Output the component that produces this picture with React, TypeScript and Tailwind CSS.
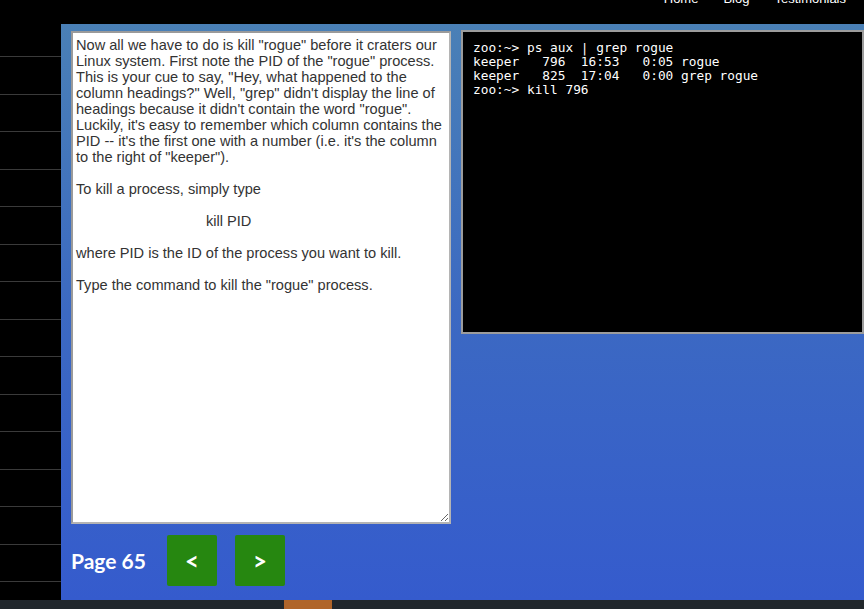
const sideRows = Array.from({ length: 15 })

const termLines = [
  'zoo:~> ps aux | grep rogue',
  'keeper   796  16:53   0:05 rogue',
  'keeper   825  17:04   0:00 grep rogue',
  'zoo:~> kill 796',
]

export default function App() {
  return (
    <div className="w-[864px] h-[609px] overflow-hidden bg-black flex flex-col font-['Liberation_Sans',Arial,sans-serif]">
      {/* Top nav, mostly scrolled off */}
      <nav className="h-6 flex justify-end gap-[25px] pr-[18px] text-[13px] text-white leading-none">
        <span className="-mt-[8px]">Home</span>
        <span className="-mt-[8px]">Blog</span>
        <span className="-mt-[8px]">Testimonials</span>
      </nav>

      <div className="flex flex-1 min-h-0">
        {/* Left menu stub */}
        <div className="w-[61px] shrink-0">
          <div className="h-[33px] border-b border-[#3a3a3a]" />
          {sideRows.map((_, i) => (
            <div key={i} className="h-[37.5px] border-b border-[#3a3a3a]" />
          ))}
        </div>

        {/* Main lesson panel */}
        <main className="flex-1 flex flex-col pl-[10px] pt-[7px] bg-gradient-to-b from-[#4a80b6] via-[#3c69c2] to-[#355bcd]">
          <div className="flex gap-[10px] items-start">
            <div className="w-[380px] h-[493px] shrink-0 bg-white border-2 border-[#b4b4b4] border-t-[#9a9a9a] border-l-[#9a9a9a] resize overflow-auto pl-[3px] pr-[2px] pt-[4px] text-[14.6px] leading-[16px] text-[#333]">
              <p className="mb-4">
                Now all we have to do is kill "rogue" before it craters our Linux system. First note the PID of the "rogue" process. This is your cue to say, "Hey, what happened to the column headings?" Well, "grep" didn't display the line of headings because it didn't contain the word "rogue". Luckily, it's easy to remember which column contains the PID -- it's the first one with a number (i.e. it's the column to the right of "keeper").
              </p>
              <p className="mb-4">To kill a process, simply type</p>
              <p className="mb-4 pl-[130px]">kill PID</p>
              <p className="mb-4">where PID is the ID of the process you want to kill.</p>
              <p>Type the command to kill the "rogue" process.</p>
            </div>

            <div className="flex-1 h-[304px] -mt-px bg-black border-2 border-[#9c9c9c] pl-[10px] pt-[9px] font-['DejaVu_Sans_Mono',monospace] text-[12.8px] leading-[14px] text-white whitespace-pre">
              {termLines.map((l, i) => (
                <div key={i}>{l}</div>
              ))}
            </div>
          </div>

          <div className="flex items-center h-[51px] mt-[11px]">
            <span className="font-['Lato',sans-serif] font-bold text-[21px] text-white w-[96px]">Page 65</span>
            <button className="w-[50px] h-[51px] rounded-[2px] bg-[#268710] text-white font-['Lato',sans-serif] font-bold text-[24px]">&lt;</button>
            <button className="w-[50px] h-[51px] ml-[18px] rounded-[2px] bg-[#268710] text-white font-['Lato',sans-serif] font-bold text-[24px]">&gt;</button>
          </div>
          <div className="flex-1" />
        </main>
      </div>

      {/* Footer strip */}
      <div className="h-[9px] shrink-0 bg-[#21272c] flex">
        <div className="w-[284px]" />
        <div className="w-[48px] bg-[#b0652a]" />
      </div>
    </div>
  )
}
